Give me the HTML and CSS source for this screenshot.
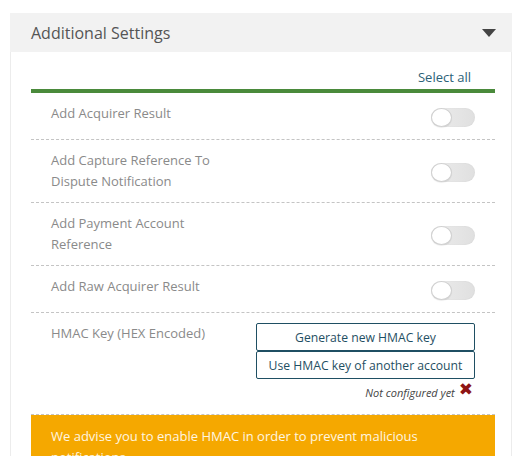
FILE: index.html
```html
<!DOCTYPE html>
<html>
<head>
<meta charset="utf-8">
<link rel="stylesheet" href="styles.css">
</head>
<body>
<div class="panel">
  <div class="panel-head">
    <span class="panel-title">Additional Settings</span>
    <span class="caret"></span>
  </div>
  <div class="panel-body">
    <div class="select-row"><a class="select-all">Select all</a></div>
    <div class="row">
      <div class="label">Add Acquirer Result</div>
      <span class="toggle"><span class="knob"></span></span>
    </div>
    <div class="row">
      <div class="label">Add Capture Reference To<br>Dispute Notification</div>
      <span class="toggle"><span class="knob"></span></span>
    </div>
    <div class="row">
      <div class="label">Add Payment Account<br>Reference</div>
      <span class="toggle"><span class="knob"></span></span>
    </div>
    <div class="row">
      <div class="label">Add Raw Acquirer Result</div>
      <span class="toggle"><span class="knob"></span></span>
    </div>
    <div class="row hmac">
      <div class="label">HMAC Key (HEX Encoded)</div>
      <div class="hmac-actions">
        <button class="btn">Generate new HMAC key</button>
        <button class="btn">Use HMAC key of another account</button>
        <div class="status"><span class="status-text">Not configured yet</span><span class="cross">&#x2716;</span></div>
      </div>
    </div>
    <div class="warning">We advise you to enable HMAC in order to prevent malicious notifications</div>
  </div>
</div>
</body>
</html>
```
FILE: styles.css
```css
html, body {
  margin: 0;
  padding: 0;
  background: #fff;
}
body {
  padding: 13px 10px 0 10px;
  font-family: "Open Sans", "Liberation Sans", sans-serif;
  font-size: 13px;
  line-height: 21px;
}
.panel {
  width: 502px;
}
.panel-head {
  height: 39px;
  background: #f2f2f2;
  display: flex;
  align-items: center;
  justify-content: space-between;
  padding: 0 16px 0 21px;
}
.panel-title {
  font-size: 16px;
  color: #555;
  padding-top: 2px;
}
.caret {
  width: 0;
  height: 0;
  border-left: 7.5px solid transparent;
  border-right: 7.5px solid transparent;
  border-top: 8px solid #444;
  margin-top: 1px;
}
.panel-body {
  border-left: 1px solid #ececec;
  border-right: 1px solid #ececec;
  padding: 0 16px 0 20px;
}
.select-row {
  display: flex;
  justify-content: flex-end;
  padding: 15px 24px 1px 0;
  border-bottom: 4px solid #4a8a3b;
}
.select-all {
  color: #2b6177;
  cursor: pointer;
}
.row {
  display: flex;
  justify-content: space-between;
  align-items: center;
  padding: 10px 20px;
  min-height: 26px;
  border-bottom: 1px dashed #c4c4c4;
}
.label {
  color: #8a8a8a;
  align-self: flex-start;
}
.toggle {
  position: relative;
  width: 44px;
  height: 19px;
  border-radius: 10px;
  background: linear-gradient(to right, #ececec, #e0e0e0);
  box-shadow: inset 0 0 2px rgba(0,0,0,0.06);
  margin-top: 2px;
}
.knob {
  position: absolute;
  left: 0;
  top: 0;
  width: 19px;
  height: 17px;
  border-radius: 50%;
  background: #fff;
  border: 1px solid #d0d0d0;
  box-shadow: 0 1px 1px rgba(0,0,0,0.08);
}
.hmac {
  align-items: flex-start;
  padding: 10px 20px 10px 20px;
}
.hmac-actions {
  display: flex;
  flex-direction: column;
  align-items: flex-end;
}
.btn {
  width: 219px;
  height: 28px;
  background: #fff;
  border: 1px solid #1f4f63;
  border-radius: 2px;
  color: #1f4f63;
  font-family: "Open Sans", "Liberation Sans", sans-serif;
  font-size: 12.2px;
  padding: 0;
  margin: 0;
  display: block;
}
.status {
  display: flex;
  align-items: flex-start;
  margin-top: 2px;
  height: 23px;
}
.status-text {
  font-style: italic;
  font-size: 11px;
  line-height: 14px;
  color: #444;
  margin-right: 4px;
  padding-top: 5px;
}
.cross {
  color: #8e1414;
  font-size: 17px;
  line-height: 17px;
  margin-right: 2px;
  font-family: "DejaVu Sans", sans-serif;
}
.warning {
  background: #f5a800;
  color: #fff6e0;
  padding: 11px 20px;
  font-weight: 500;
  font-size: 13px;
  line-height: 21px;
}
```
